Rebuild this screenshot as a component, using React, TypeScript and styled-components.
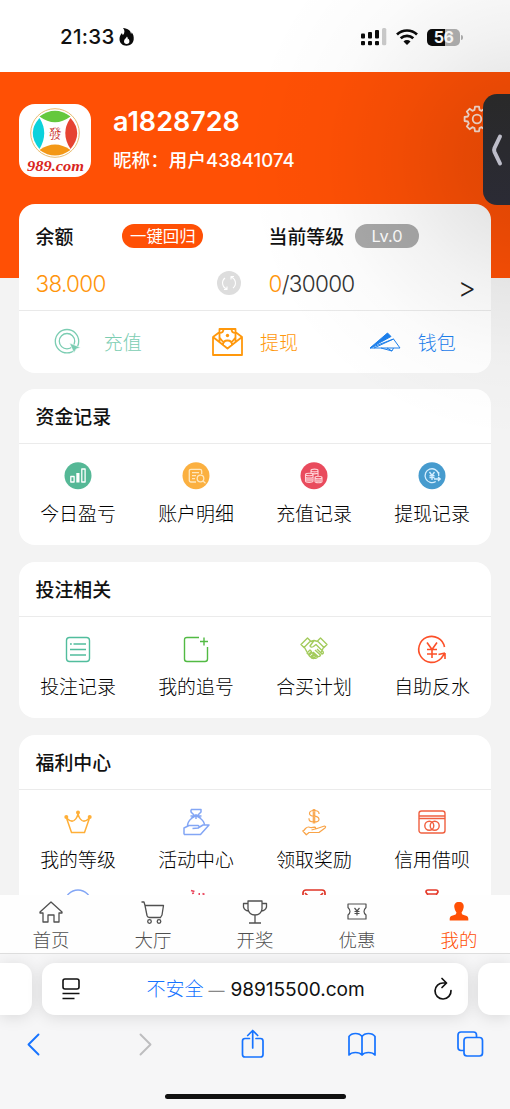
import React from "react";
import styled, { createGlobalStyle } from "styled-components";

const GlobalStyle = createGlobalStyle`
  * { box-sizing: border-box; }
  body {
    margin: 0;
    font-family: Inter, "Noto Sans CJK SC", sans-serif;
    color: #111;
    background: #f3f3f3;
  }
  svg { display: block; flex: none; overflow: visible; }
`;

const ORANGE = "#ff5005";

const Page = styled.div`
  position: relative;
  display: flex;
  flex-direction: column;
  width: 510px;
  height: 1109px;
  overflow: hidden;
`;

const StatusBar = styled.div`
  display: flex;
  align-items: center;
  justify-content: space-between;
  height: 72px;
  padding: 2px 50px 0 60px;
  background: #fff;
`;

const Clock = styled.div`
  display: flex;
  align-items: center;
  gap: 4px;
  font-size: 20.5px;
  font-weight: 500;
  line-height: 24px;
  letter-spacing: 0.3px;
`;

const StatusIcons = styled.div`
  display: flex;
  align-items: center;
  gap: 9px;
`;

const Battery = styled.div`
  position: relative;
  width: 33px;
  height: 17px;
  border-radius: 5px;
  background: linear-gradient(90deg, #0b0b0b 55%, #b1b1b1 55%);
  color: #fff;
  font-size: 16px;
  font-weight: 700;
  line-height: 17px;
  text-align: center;
  letter-spacing: -0.6px;
  &::after {
    content: "";
    position: absolute;
    right: -3px;
    top: 6px;
    width: 2px;
    height: 5px;
    border-radius: 0 2px 2px 0;
    background: #b1b1b1;
  }
`;

const Content = styled.main`
  flex: 1;
  min-height: 0;
  overflow: hidden;
`;

const Profile = styled.header`
  display: flex;
  height: 206px;
  padding: 32px 20px 0 19px;
  background: ${ORANGE};
  color: #fff;
`;

const Avatar = styled.div`
  width: 72px;
  height: 73px;
  border-radius: 16px;
  background: #fff;
  overflow: hidden;
`;

const ProfileText = styled.div`
  flex: 1;
  margin-left: 22px;
`;

const UserName = styled.div`
  padding-top: 1px;
  font-size: 27px;
  font-weight: 600;
  line-height: 34px;
`;

const Nickname = styled.div`
  margin-top: 7px;
  font-size: 18.5px;
  font-weight: 500;
  line-height: 28px;
  letter-spacing: 0.1px;
`;

const Card = styled.section<{ $overlap?: boolean }>`
  margin: ${(p) => (p.$overlap ? "-74px" : "0")} 19px 17px;
  border-radius: 16px;
  background: #fff;
  ${(p) => p.$overlap && "margin-bottom: 16px; position: relative;"}
`;

const Account = styled.div`
  display: grid;
  grid-template-columns: 233px 1fr;
  height: 107px;
  padding: 19px 17px 0 16.5px;
  border-bottom: 1px solid #e9e9e9;
`;

const AccountRow = styled.div<{ $spread?: boolean; $tall?: boolean }>`
  display: flex;
  align-items: center;
  justify-content: ${(p) => (p.$spread ? "space-between" : "flex-start")};
  height: ${(p) => (p.$tall ? 36 : 25)}px;
  margin-top: ${(p) => (p.$tall ? 17 : 0)}px;
`;

const Title = styled.div`
  padding-top: 4px;
  font-size: 18.9px;
  font-weight: 500;
  line-height: 28px;
`;

const Pill = styled.div<{ $width: number; $color: string; $left: number }>`
  width: ${(p) => p.$width}px;
  height: 24px;
  margin-left: ${(p) => p.$left}px;
  border-radius: 12px;
  background: ${(p) => p.$color};
  color: #fff;
  font-size: 16.4px;
  line-height: 24px;
  text-align: center;
  white-space: nowrap;
`;

const Amount = styled.div`
  padding-top: 2px;
  font-size: 22.5px;
  font-weight: 300;
  line-height: 28px;
  letter-spacing: -0.7px;
  color: #333;
  em { font-style: normal; color: #ff950a; }
`;

const RefreshSpot = styled.div`
  margin-right: 28px;
`;

const More = styled.div`
  padding-top: 9px;
  margin-right: -2px;
  font-size: 28px;
  font-weight: 300;
  line-height: 28px;
  color: #222;
`;

const Actions = styled.div`
  display: grid;
  grid-template-columns: repeat(3, 1fr);
  height: 62px;
`;

const Action = styled.div<{ $color: string; $gap: number; $shift?: number }>`
  display: flex;
  align-items: center;
  justify-content: center;
  gap: ${(p) => p.$gap}px;
  padding-right: ${(p) => p.$shift ?? 0}px;
  color: ${(p) => p.$color};
  font-size: 19px;
  font-weight: 300;
  line-height: 28px;
  span { padding-top: 3px; }
`;

const CardHead = styled.div`
  height: 55px;
  padding: 11px 16.5px 0;
  border-bottom: 1px solid #ebebeb;
`;

const Grid = styled.div`
  display: grid;
  grid-template-columns: repeat(4, 1fr);
  row-gap: 13px;
  padding: 18px 0 16px;
`;

const Cell = styled.div`
  display: flex;
  flex-direction: column;
  align-items: center;
  font-size: 18.9px;
  font-weight: 300;
  line-height: 28px;
  color: #000;
  svg { margin-bottom: 11px; }
`;

const TabBar = styled.nav`
  position: relative;
  display: grid;
  grid-template-columns: repeat(5, 1fr);
  height: 58px;
  background: #fefefe;
`;

const Tab = styled.div<{ $active?: boolean }>`
  display: flex;
  flex-direction: column;
  align-items: center;
  padding-top: 3px;
  color: ${(p) => (p.$active ? ORANGE : "#505050")};
  font-size: 18.5px;
  font-weight: 300;
  line-height: 28px;
  svg { margin-bottom: 2px; }
`;

const Browser = styled.footer`
  position: relative;
  height: 156px;
  border-top: 1px solid #dedede;
  background: #f6f6f7;
`;

const AddressRow = styled.div`
  display: grid;
  grid-template-columns: 32px 426px 32px;
  gap: 10px;
  height: 52px;
  margin-top: 9px;
`;

const Address = styled.div<{ $side?: "left" | "right" }>`
  display: flex;
  align-items: center;
  justify-content: space-between;
  padding: 0 ${(p) => (p.$side ? 0 : 16)}px 0 ${(p) => (p.$side ? 0 : 20)}px;
  border-radius: ${(p) =>
    p.$side === "left" ? "0 13px 13px 0" : p.$side === "right" ? "13px 0 0 13px" : "13px"};
  background: #fff;
  box-shadow: 0 2px 16px rgba(0, 0, 0, 0.12);
`;

const Url = styled.div`
  margin-right: 3px;
  padding-top: 1px;
  font-size: 19.1px;
  line-height: 28px;
  letter-spacing: -0.05px;
  white-space: nowrap;
  b { color: #1673ff; font-weight: 300; }
  i { color: #888; font-size: 16px; font-style: normal; margin: 0 6px 0 5px; }
`;

const Toolbar = styled.div`
  display: flex;
  align-items: center;
  justify-content: space-between;
  height: 30px;
  margin-top: 14px;
  padding: 0 24px 0 18px;
  color: #1673ff;
`;

const HomeIndicator = styled.div`
  width: 181px;
  height: 5px;
  margin: 35px auto 0;
  border-radius: 3px;
  background: #111;
`;

const Glow = styled.div`
  position: absolute;
  inset: 0 0 auto auto;
  width: 340px;
  height: 460px;
  pointer-events: none;
  background: radial-gradient(
    circle at 355px 160px,
    rgba(0, 0, 0, 0.13) 0,
    rgba(0, 0, 0, 0.1) 60px,
    rgba(0, 0, 0, 0.05) 130px,
    rgba(0, 0, 0, 0.017) 200px,
    rgba(0, 0, 0, 0) 280px
  );
`;

const Drawer = styled.div`
  position: absolute;
  right: 0;
  top: 94px;
  display: flex;
  align-items: center;
  width: 27px;
  height: 111px;
  padding-left: 8px;
  border-radius: 14px 0 0 14px;
  background: linear-gradient(#292929, #2b2b35);
`;

type IconProps = { children: React.ReactNode; color?: string; w?: number; h?: number; sw?: number };
const Icon = ({ children, color = "currentColor", w = 28, h = 28, sw = 1.3 }: IconProps) => (
  <svg width={w} height={h} viewBox={`0 0 ${w} ${h}`} fill="none" stroke={color} strokeWidth={sw} strokeLinejoin="round">
    {children}
  </svg>
);

const gearPath = (() => {
  const pts: string[] = [];
  for (let i = 0; i < 8; i++) {
    const a = (i * Math.PI) / 4;
    [[-0.27, 9.4], [-0.16, 12.6], [0.16, 12.6], [0.27, 9.4]].forEach(([d, r]) => {
      pts.push(`${(13 + r * Math.cos(a + d)).toFixed(1)} ${(13 + r * Math.sin(a + d)).toFixed(1)}`);
    });
  }
  return `M${pts.join("L")}Z`;
})();

const Logo = () => (
  <svg width="72" height="73" viewBox="0 0 72 73">
    <circle cx="36" cy="29" r="24.3" fill="#fff" stroke="#e8bd72" strokeWidth="1" />
    <path d="M20.5 12.5Q36 1 51.5 12.5Q36 24 20.5 12.5Z" fill="#65c83d" />
    <path d="M20.5 46Q36 35 51.5 46Q36 57 20.5 46Z" fill="#f39817" />
    <path d="M20.5 14Q7 29 20.5 45Q30 29 20.5 14Z" fill="#0bd2dc" />
    <path d="M51.5 14Q65 29 51.5 45Q41 29 51.5 14Z" fill="#e64432" />
    <text x="36" y="34" textAnchor="middle" fontFamily="'Noto Serif CJK SC','Noto Sans CJK TC',serif" fontSize="13" fill="#c93028">發</text>
    <text x="36.5" y="67" textAnchor="middle" textLength="57" lengthAdjust="spacingAndGlyphs" fontFamily="'Liberation Serif',serif" fontSize="15.5" fontWeight="700" fontStyle="italic" fill="#d9251d">989.com</text>
  </svg>
);

const fundItems = [
  ["今日盈亏", <Icon color="#fff"><circle cx="14" cy="13.7" r="13.5" fill="#55b896" stroke="none" /><path d="M6.8 14.5h3.3v5.500H6.8zM17.8 7h3.300v13h-3.300z" /><path d="M12.300 11h3.200v9.500h-3.200z" fill="#fff" stroke="none" /></Icon>],
  ["账户明细", <Icon color="#ffe7bd"><circle cx="14" cy="13.7" r="13.5" fill="#fbb040" stroke="none" /><path d="M14 20H9q-1.700 0-1.700-1.700V9Q7.300 7.300 9 7.300h9q1.700 0 1.700 1.700v3M10 10.700h7M10 13.700h4M10 16.700h3" /><circle cx="18.500" cy="16.500" r="3.300" /><path d="m21 19 2.500 2.300" /></Icon>],
  ["充值记录", <Icon color="#ffd3d7" sw={1.1}><circle cx="14" cy="13.7" r="13.5" fill="#e94b5d" stroke="none" /><path d="M11 11V8.500c0-1.800 7-1.800 7 0v6M11 9c1 1.200 6 1.200 7 0M11 11c2 1 5 1 7 0M5.500 12.500v6.500c0 1.800 7.500 1.800 7.500 0v-6.500c0-1.700-7.500-1.700-7.500 0c0 1.700 7.500 1.700 7.500 0M5.500 15c1 1.500 6.500 1.500 7.500 0M5.500 17.200c1 1.500 6.500 1.500 7.500 0M15 15.500v4c0 1.700 7 1.700 7 0v-4c0-1.600-7-1.600-7 0c0 1.600 7 1.600 7 0M15 17.500c1 1.400 6 1.400 7 0" /><path d="M6 15.500h6.500v4H6zM15.500 17.500H22v2.500h-6.500z" fill="#f6aab2" stroke="none" /></Icon>],
  ["提现记录", <Icon color="#d6efff"><circle cx="14" cy="13.7" r="13.5" fill="#469bce" stroke="none" /><path d="M20.700 12a6.900 6.900 0 1 0-3 7.500M20.700 10v4M16 17h6M20 15l2.300 2-2.300 2M11.500 10l2.500 3.500 2.500-3.500M11.500 13.700h5M11.500 15.500h5M14 13.500v4.500" /></Icon>],
] as const;

const betItems = [
  ["投注记录", <Icon color="#51bd9d" sw={1.4}><rect x="2.5" y="2.5" width="23" height="24" rx="3" /><path d="M6 9h1.800M9.500 9H22M6 14.500h16M6 20h16" /></Icon>],
  ["我的追号", <Icon color="#52ba43" sw={1.4}><path d="M17 2.500H5q-2.500 0-2.500 2.500v19q0 2.500 2.500 2.500h18q2.500 0 2.500-2.500V12M18 6.500h8M22 2.500v8" /></Icon>],
  ["合买计划", <Icon color="#a3cb5c" sw={1.4}><path d="m1 9.500 6.500-6.500 3 3L4 12.500zM27 9.500 20.500 3l-3 3 6.500 6.500zM10 6.500l4-1 4 1M4.500 12.500l2.500 4.500M23.500 12.500l-2.500 5M14 5.500l-4 5.500q1 2 3.500.5L16 9.500l7 7q1 2-1 2.500l-5-5M15 15l5.500 5q-.5 2-2.500 1.500l-5-4.500M13 18l4.500 4q-1 2-3.500 1l-3-2" /><path d="m7 18 3-3 1.500 1.500-3 3zM9 20.500l3-3 1.500 1.500-3 3zM11.500 23l2.500-3 1.500 1.500-2 2z" /></Icon>],
  ["自助反水", <Icon color="#fc5029" sw={1.6}><path d="M26.500 12A13 13 0 1 0 23 23.500M27 18v6M20.500 19.500l6.500-1.500M27 18l-4 5.500M9 7.500l5 7 5-7M9 14.500h10M9 19h10M14 14.500V23" /></Icon>],
] as const;

const benefitItems = [
  ["我的等级", <Icon color="#ffaf38" sw={1.5}><path d="M7.500 24.500 2.500 10q4.500 4.500 7.500 2.500Q13.500 10 14 5q.5 5 4 7.500 3 2 7.500-2.500l-5 14.500z" /><g fill="#ffaf38" stroke="none"><circle cx="14" cy="4.500" r="2" /><circle cx="2.300" cy="9" r="2" /><circle cx="25.700" cy="9" r="2" /></g></Icon>],
  ["活动中心", <Icon color="#83a6f5" sw={1.5}><path d="M9 1.500h10v2.500l-3.500 3.500 3 3c2.500 2 4 4.500 4 7M9 1.500v2.500l3.500 3.500-3 3c-2.500 2-4 5-4 7.500M8.500 8h11M9 10.500l5-3 5 3M14 6v5M2 26.500v-6.500l5-2.500H16q2 1 .5 2.500l-6 .5M16 20l5-3h6l-8.500 9.500H2" /></Icon>],
  ["领取奖励", <Icon color="#f9a448" sw={1.2}><path d="M19 6V5q-.5-2.500-5-2.500T9.500 5.500Q9.500 8 14 8.200t5 3Q19 14 14 14t-5-3v-.7M13.300 1v14.500M14.700 1v14.500M3 23.500l2.500-3q2-2 4-1.300 1.500.8 5 0 2 .3.500 1.800L11.500 22M15.500 21l9-3q2 .5.500 2l-6 4.500H9l-3 2.500M2.500 22.500 6.500 27" /></Icon>],
  ["信用借呗", <Icon color="#f06040" sw={1.4}><rect x="1" y="3" width="26" height="22" rx="2.5" /><path d="M1 8h26M1 10.500h26" /><circle cx="11.300" cy="17.800" r="4.500" /><circle cx="16.700" cy="17.800" r="4.500" /></Icon>],
  ["", <Icon color="#83a6f5" sw={1.4}><circle cx="14" cy="15" r="13" /></Icon>],
  ["", <Icon color="#e9455c" sw={1.8}><path d="m9 2.500 3.500 1M10 5.500l2-.5M16.500 6h1.500M20.500 5.500l2 1" /></Icon>],
  ["", <Icon color="#df3527" sw={1.7}><rect x="3" y="2" width="22" height="24" rx="3" /><path d="m5 5 3 3M23 5l-3 3" /></Icon>],
  ["", <Icon color="#e53a2a" sw={1.7}><path d="M10 7 8 4q0-2 2-2h8q2 0 2 2l-2 3M10 6h8" /></Icon>],
] as const;

const Section = ({ title, items }: { title: string; items: readonly (readonly [string, React.ReactNode])[] }) => (
  <Card>
    <CardHead><Title>{title}</Title></CardHead>
    <Grid>
      {items.map(([label, icon], i) => (
        <Cell key={i}>{icon}{label}</Cell>
      ))}
    </Grid>
  </Card>
);

const tabs = [
  ["首页", <Icon h={26}><path d="M3 14 14 4l11 10v1h-3v9h-5v-7h-6v7H6v-9H3z" /></Icon>],
  ["大厅", <Icon h={26}><path d="M2.500 4H5l1 3.500 2 10q.5 2 2.500 2H22M6 7.500h18.500l-1.500 9.500-1.500 2.500" /><circle cx="10.500" cy="23.500" r="1.800" /><circle cx="20" cy="23.500" r="1.800" /></Icon>],
  ["开奖", <Icon h={26}><path d="M7 3h14v8q-1 6-7 6t-7-6zM7 5.500H2.500V9q1 3.500 5 4M21 5.500h4.500V9q-1 3.500-5 4M14 17v7.500M8 25h12" /></Icon>],
  ["优惠", <Icon h={26} sw={1.2}><path d="M5 6h18v3.500q-4 4 0 7.500v4H5v-4q4-3.500 0-7.500zM11.500 10l2.500 3 2.500-3M11.500 13.500h5M11.500 15.500h5M14 13v4.500" /></Icon>],
  ["我的", <Icon h={26}><path d="M14 4c3.500 0 5 2 4.700 5.200q-.5 3.500-2.200 5.500.2 2 3 2.600 3.500.6 3.800 3.200V22.500H4.700v-2q.3-2.600 3.800-3.200 2.800-.6 3-2.600-1.700-2-2.200-5.500C9 6 10.500 4 14 4Z" fill="currentColor" stroke="none" /></Icon>],
] as const;

export default function App() {
  return (
    <Page>
      <GlobalStyle />
      <StatusBar>
        <Clock>
          21:33
          <svg width="15" height="18" viewBox="0 0 15 18" fill="#0b0b0b">
            <path fillRule="evenodd" d="M4 0C9 .3 12 3 12 6q.7-.6.6-1.700C14.200 6 15 8.500 14.700 11.500c-.4 3.800-3.400 6.200-7.200 6.200C3.500 17.700.5 15 .5 11c0-2.500 1-4.500 2.500-6q.1 1.400 1 2C5.800 5 6 2.300 4 0ZM8 8.500C7.500 10 5 11.200 5 13.300a2.700 2.700 0 0 0 5.400 0c0-1.300-.6-1.900-.9-2.600l-.8.800C9.100 10.300 8.500 9.300 8 8.500Z" />
          </svg>
        </Clock>
        <StatusIcons>
          <svg width="26" height="18" viewBox="0 0 26 18" fill="#0b0b0b">
            <rect x="0" y="5.5" width="4" height="5" rx="1" /><rect x="7" y="4" width="4" height="6.5" rx="1" /><rect x="14" y="2" width="4" height="8.500" rx="1" />
            <rect x="0" y="13" width="4" height="4.300" rx="1" /><rect x="7" y="13" width="4" height="4.300" rx="1" /><rect x="14" y="13" width="4" height="4.300" rx="1" />
            <rect x="21" y="0" width="4.300" height="17.300" rx="1.500" fill="#ccc" />
          </svg>
          <svg width="22" height="16" viewBox="0 0 22 16" fill="none" stroke="#0b0b0b" strokeWidth="2.700">
            <path d="M1 5.500a14.500 14.500 0 0 1 20 0M4.700 9.300a9.200 9.200 0 0 1 12.600 0" /><path d="M11 16 7.500 12.500a5 5 0 0 1 7 0Z" fill="#0b0b0b" stroke="none" />
          </svg>
          <Battery>56</Battery>
        </StatusIcons>
      </StatusBar>

      <Content>
        <Profile>
          <Avatar><Logo /></Avatar>
          <ProfileText>
            <UserName>a1828728</UserName>
            <Nickname>昵称：用户43841074</Nickname>
          </ProfileText>
          <Icon w={26} h={30} color="#ffe3d6" sw={1.8}><g transform="translate(0 2)"><path d={gearPath} /><circle cx="13" cy="13" r="4.300" /></g></Icon>
        </Profile>

        <Card $overlap>
          <Account>
            <div>
              <AccountRow><Title>余额</Title><Pill $width={81} $left={49} $color={ORANGE}>一键回归</Pill></AccountRow>
              <AccountRow $spread $tall>
                <Amount><em>38.000</em></Amount>
                <RefreshSpot>
                  <Icon w={24} h={24} color="#fff" sw={1.1}><circle cx="12" cy="12" r="12" fill="#ddd" stroke="none" /><path d="M10 18a6.300 6.300 0 0 1-2-11M14 6a6.300 6.300 0 0 1 2 11M10 15.500v3H7M14 8.500v-3h3" /></Icon>
                </RefreshSpot>
              </AccountRow>
            </div>
            <div>
              <AccountRow><Title>当前等级</Title><Pill $width={64} $left={11} $color="#a9a9a9">Lv.0</Pill></AccountRow>
              <AccountRow $spread $tall>
                <Amount><em>0</em>/30000</Amount>
                <More>&gt;</More>
              </AccountRow>
            </div>
          </Account>
          <Actions>
            <Action $color="#7bcdb2" $gap={21} $shift={3}>
              <Icon w={32}><circle cx="16" cy="13.2" r="11.7" /><circle cx="16" cy="13.2" r="7.7" /><path d="m18.500 15 11 4.500-4.500 1.500-2 4z" fill="currentColor" stroke="#fff" strokeWidth=".6" /></Icon>
              <span>充值</span>
            </Action>
            <Action $color="#ff980c" $gap={17}>
              <Icon w={31} sw={1.8}><path d="M1 9v18h29V9L15.500 20.500zM1 9l6-4.500M30 9l-6-4.500M7.500 13.500V1h16v12.500M7.500 5q4 0 4-4M23.500 5q-4 0-4-4M11 17q0-4.500 4.500-4.500T20 17M7.500 9.500l4 5M23.500 9.500l-4 5" /><circle cx="15.500" cy="7.500" r="1.700" fill="currentColor" stroke="none" /></Icon>
              <span>提现</span>
            </Action>
            <Action $color="#1c80ed" $gap={18}>
              <Icon w={31} sw={1}><g transform="translate(0 2)"><path d="M1 18 18.500 3l3.500 3.500Z" fill="currentColor" /><path d="M1 18 24.500 9l6.500 9ZM5 18 24.500 9M12 18l11 3 1.500-3M18 18l5 3" /></g></Icon>
              <span>钱包</span>
            </Action>
          </Actions>
        </Card>

        <Section title="资金记录" items={fundItems} />
        <Section title="投注相关" items={betItems} />
        <Section title="福利中心" items={benefitItems} />
      </Content>

      <TabBar>
        {tabs.map(([label, icon], i) => (
          <Tab key={label} $active={i === 4}>{icon}{label}</Tab>
        ))}
      </TabBar>

      <Browser>
        <AddressRow>
          <Address $side="left" />
          <Address>
            <Icon w={18} h={22} color="#111" sw={1.6}><rect x="1" y="1" width="16" height="10" rx="2" /><path d="M.5 15.500h17M.5 20.500h12" /></Icon>
            <Url><b>不安全</b><i>—</i>98915500.com</Url>
            <Icon w={18} h={22} color="#111" sw={1.7}><path d="M12.500 5H9.500a8 8 0 1 0 7.500 7.500M8 .5 12.500 5 8 9.500" strokeLinecap="round" /></Icon>
          </Address>
          <Address $side="right" />
        </AddressRow>
        <Toolbar>
          <Icon w={30} h={30} sw={1.9}><path d="M20.500 5.500 10.500 15.500l10 10" strokeLinecap="round" /></Icon>
          <Icon w={30} h={30} color="#bdbdbf" sw={1.9}><path d="m12.500 5.500 10 10-10 10" strokeLinecap="round" /></Icon>
          <Icon w={30} h={30} sw={1.7}><path d="M12.500 9.500H8q-2.500 0-2.500 2.500v13.500Q5.500 28 8 28h15.500q2.500 0 2.500-2.500V12q0-2.500-2.500-2.500H19M15.700 19V2M10.700 6.500l5-5 5 5" strokeLinecap="round" /></Icon>
          <Icon w={30} h={30} sw={1.7}><g transform="translate(-1 0)"><path d="M16 7.500Q14 4.500 9.500 4.500T3 7.500V26q2-2.500 6.500-2.500T16 26q2-2.500 6.500-2.500T29 26V7.500q-2-3-6.500-3T16 7.500V26" /></g></Icon>
          <Icon w={30} h={30} sw={1.7}><g transform="translate(-1 -1)"><rect x="9" y="9.5" width="18.500" height="18.500" rx="3" /><path d="M9 22.500H6q-3 0-3-3V7q0-3 3-3h12.500q3 0 3 3v2.500" /></g></Icon>
        </Toolbar>
        <HomeIndicator />
      </Browser>

      <Glow />
      <Drawer>
        <Icon w={11} h={32} color="#bdbdc9" sw={4}><path d="M9 2.500 3.500 14q-.8 2 0 4L9 29.500" strokeLinecap="round" /></Icon>
      </Drawer>
    </Page>
  );
}
